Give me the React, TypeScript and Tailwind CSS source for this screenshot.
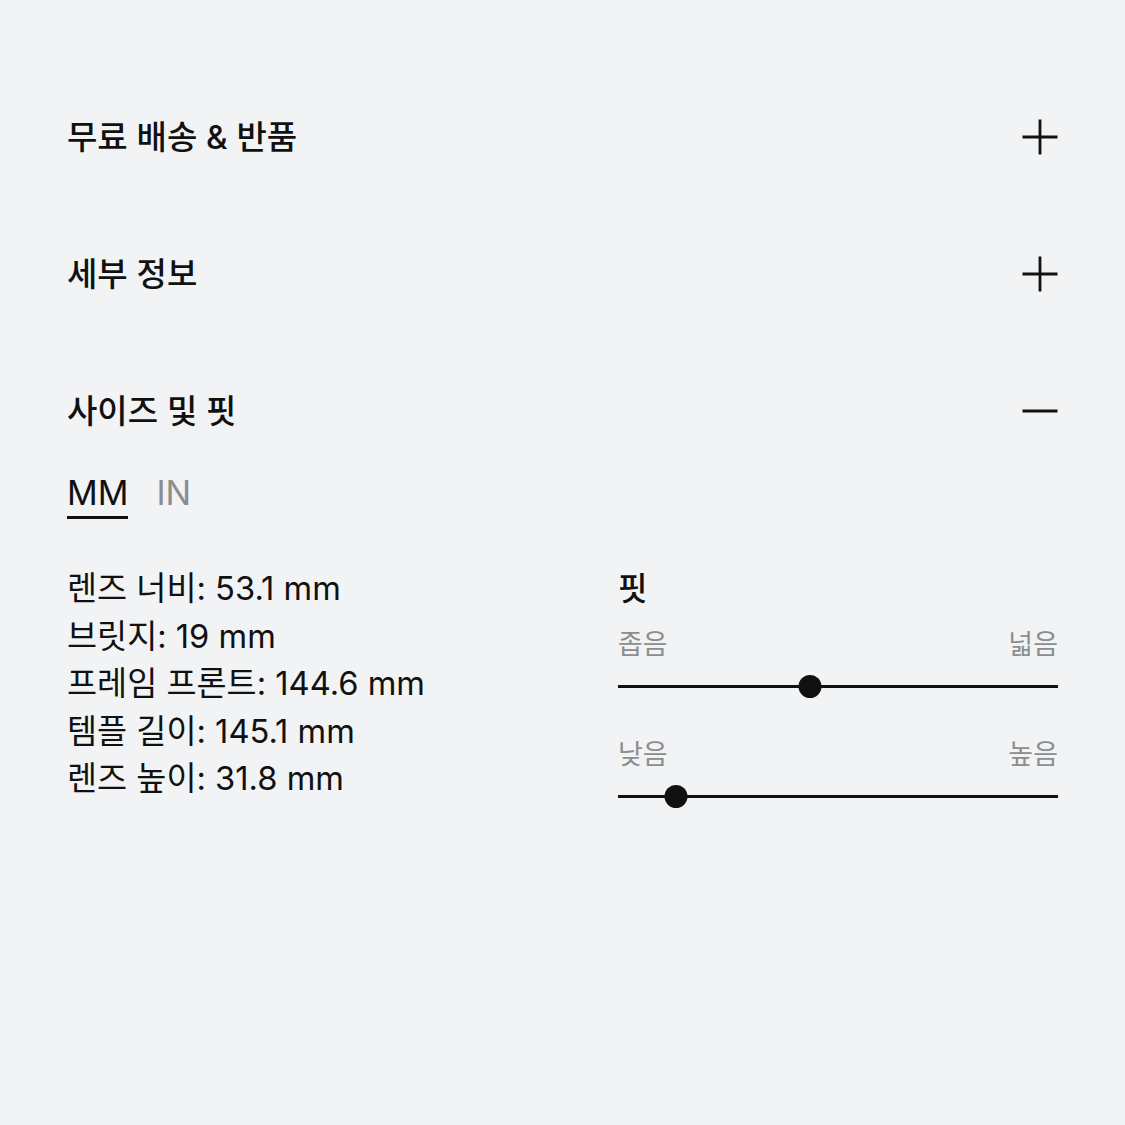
import React from "react";

const FONT = { fontFamily: '"Inter", "Noto Sans CJK KR", sans-serif' };

function PlusIcon() {
  return (
    <svg width="36" height="36" viewBox="0 0 36 36" className="text-[#111]">
      <path d="M0.5 18H35.5M18 0.5V35.5" stroke="currentColor" strokeWidth="2.8" fill="none" />
    </svg>
  );
}

function MinusIcon() {
  return (
    <svg width="36" height="36" viewBox="0 0 36 36" className="text-[#111]">
      <path d="M0.5 18H35.5" stroke="currentColor" strokeWidth="2.8" fill="none" />
    </svg>
  );
}

function AccordionHeader({ title, open }: { title: string; open?: boolean }) {
  return (
    <div className="flex h-[36px] items-center justify-between">
      <span className="text-[33px] font-medium leading-[36px] text-[#111]">{title}</span>
      {open ? <MinusIcon /> : <PlusIcon />}
    </div>
  );
}

function FitSlider({ left, right, pos }: { left: string; right: string; pos: number }) {
  return (
    <div className="flex flex-col">
      <div className="flex justify-between text-[27px] leading-[36px] text-[#8d8d8d]">
        <span>{left}</span>
        <span>{right}</span>
      </div>
      <div className="relative mt-[12px] h-[23px]">
        <div className="absolute left-0 right-0 top-[10px] h-[3px] bg-[#111]" />
        <div
          className="absolute top-0 h-[23px] w-[23px] -translate-x-1/2 rounded-full bg-[#111]"
          style={{ left: `${pos}%` }}
        />
      </div>
    </div>
  );
}

const specs = [
  "렌즈 너비: 53.1 mm",
  "브릿지: 19 mm",
  "프레임 프론트: 144.6 mm",
  "템플 길이: 145.1 mm",
  "렌즈 높이: 31.8 mm",
];

export default function App() {
  return (
    <div className="min-h-[1125px] w-full bg-[#f2f3f5]" style={FONT}>
      <div className="ml-[67px] flex w-[991px] flex-col pt-[119px]">
        <AccordionHeader title="무료 배송 & 반품" />
        <div className="h-[101px]" />
        <AccordionHeader title="세부 정보" />
        <div className="h-[101px]" />
        <AccordionHeader title="사이즈 및 핏" open />

        <div className="mt-[46px] flex gap-[28px]">
          <div className="flex flex-col">
            <span className="text-[34px] leading-[36px] text-[#111]">MM</span>
            <div className="mt-[5px] h-[3px] w-full bg-[#111]" />
          </div>
          <span className="text-[34px] leading-[36px] text-[#8d8d8d]">IN</span>
        </div>

        <div className="mt-[46px] grid grid-cols-[440px_440px] gap-x-[111px]">
          <div className="flex flex-col text-[32.7px] leading-[47.5px] text-[#111]">
            {specs.map((s) => (
              <span key={s}>{s}</span>
            ))}
          </div>
          <div className="flex flex-col">
            <span className="text-[32px] font-medium leading-[47.5px] text-[#111]">핏</span>
            <div className="mt-[14px]">
              <FitSlider left="좁음" right="넓음" pos={43.6} />
            </div>
            <div className="mt-[39px]">
              <FitSlider left="낮음" right="높음" pos={13.2} />
            </div>
          </div>
        </div>
      </div>
    </div>
  );
}
